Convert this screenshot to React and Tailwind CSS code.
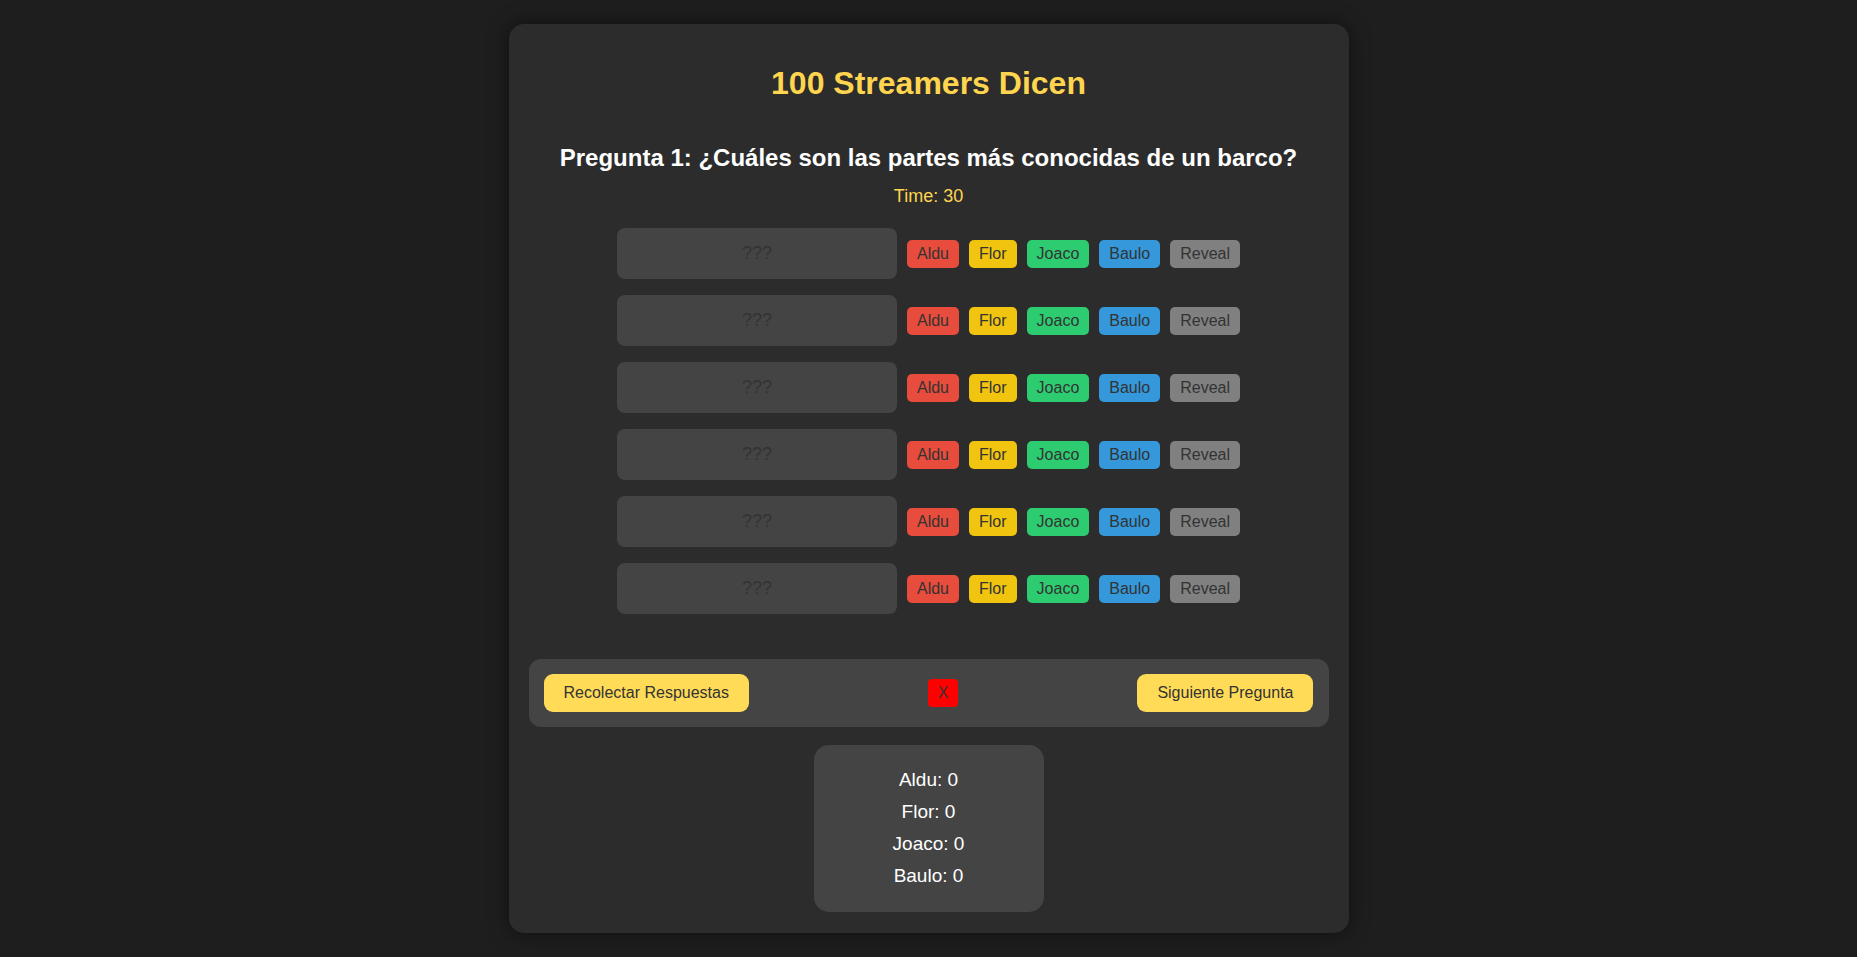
import React from "react";

const players = [
  { name: "Aldu", cls: "bg-[#e74c3c]" },
  { name: "Flor", cls: "bg-[#f1c40f]" },
  { name: "Joaco", cls: "bg-[#2ecc71]" },
  { name: "Baulo", cls: "bg-[#3498db]" },
];

function Row() {
  return (
    <div className="flex items-center justify-center">
      <div className="w-[280px] h-[51px] rounded-[8px] bg-[#444444] flex items-center justify-center text-[18px] text-[#333333]">
        ???
      </div>
      {players.map((p) => (
        <button
          key={p.name}
          className={`ml-[10px] h-[28px] px-[10px] rounded-[5px] text-[16px] leading-[18px] text-[#333333] ${p.cls}`}
        >
          {p.name}
        </button>
      ))}
      <button className="ml-[10px] h-[28px] px-[10px] rounded-[5px] text-[16px] leading-[18px] text-[#333333] bg-[#808080]">
        Reveal
      </button>
    </div>
  );
}

export default function App() {
  return (
    <div
      className="min-h-screen bg-[#1e1e1e] flex justify-center pt-[24px] pb-[24px]"
      style={{ fontFamily: '"Liberation Sans", Arial, sans-serif' }}
    >
      <div className="w-[840px] p-[20px] rounded-[15px] bg-[#2c2c2c] shadow-[0_0_20px_rgba(0,0,0,0.5)] flex flex-col items-center">
        <h1 className="mt-[21px] text-[32px] leading-[37px] font-bold text-[#ffd54f] text-center">
          100 Streamers Dicen
        </h1>
        <h2 className="mt-[42px] text-[24px] leading-[28px] font-bold text-white text-center">
          Pregunta 1: ¿Cuáles son las partes más conocidas de un barco?
        </h2>
        <div className="mt-[14px] text-[18px] leading-[21px] text-[#ffd54f] text-center">
          Time: 30
        </div>
        <div className="mt-[21px] flex flex-col gap-[16px] w-full">
          {[0, 1, 2, 3, 4, 5].map((i) => (
            <Row key={i} />
          ))}
        </div>
        <div className="mt-[45px] w-full h-[68px] px-[15px] rounded-[12px] bg-[#444444] flex items-center justify-between">
          <button className="h-[38px] px-[20px] rounded-[9px] bg-[#ffdb58] text-[16px] text-[#333333]">
            Recolectar Respuestas
          </button>
          <button className="h-[28px] px-[10px] rounded-[4px] bg-[#ff0000] text-[16px] text-[#333333]">
            X
          </button>
          <button className="h-[38px] px-[20px] rounded-[9px] bg-[#ffdb58] text-[16px] text-[#333333]">
            Siguiente Pregunta
          </button>
        </div>
        <div className="mt-[18px] w-[230px] pt-[24px] pb-[25px] rounded-[15px] bg-[#444444] flex flex-col items-center gap-[10px] text-white text-[19px] leading-[22px]">
          <div>Aldu: 0</div>
          <div>Flor: 0</div>
          <div>Joaco: 0</div>
          <div>Baulo: 0</div>
        </div>
      </div>
    </div>
  );
}
